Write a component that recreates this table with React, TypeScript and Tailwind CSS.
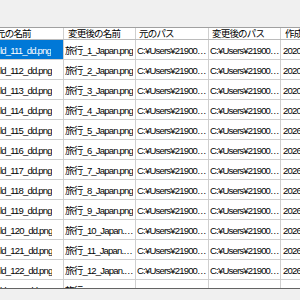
import React from "react";

const rows = Array.from({ length: 13 }, (_, i) => ({
  src: `ld_${111 + i}_dd.png`,
  dst: `旅行_${i + 1}_Japan.png`,
  srcPath: "C:¥Users¥219004¥Pictures¥old",
  dstPath: "C:¥Users¥219004¥Pictures¥new",
  created: i < 4 ? "2020/10/01" : "2026/10/01",
}));

const cell = "shrink-0 border-r border-[#cfcfcf] whitespace-nowrap overflow-hidden flex items-center";

export default function App() {
  return (
    <div
      className="w-[300px] h-[300px] bg-[#f0f0f0] flex flex-col overflow-hidden text-[9.5px] tracking-[-0.8px] text-black"
      style={{ fontFamily: '"Liberation Sans", "Noto Sans CJK JP", sans-serif' }}
    >
      <div className="h-[27px] shrink-0" />
      <div className="h-[262px] shrink-0 bg-white border-t border-[#a0a0a0] border-b border-b-[#646464] overflow-hidden">
        {/* header */}
        <div className="flex h-[12px] border-b border-[#bcbcbc] leading-[12px]">
          <div className={`${cell} w-[64px]`}>
            <span className="-ml-[4px]">元の名前</span>
          </div>
          <div className={`${cell} w-[72px] pl-[4px]`}>変更後の名前</div>
          <div className={`${cell} w-[73px] pl-[3px]`}>元のパス</div>
          <div className={`${cell} w-[72px] pl-[3px]`}>変更後のパス</div>
          <div className={`${cell} flex-1 min-w-0 pl-[4px] border-r-0`}>作成日時</div>
        </div>
        {rows.map((r, i) => (
          <div key={i} className="flex h-[20px] border-b border-[#cfcfcf]">
            <div className={`${cell} w-[64px] pt-[4px] ${i === 0 ? "bg-[#0078d7] text-white" : ""}`}>
              <span className="block overflow-hidden">{r.src}</span>
            </div>
            <div className={`${cell} w-[72px] pl-[1px] pt-[4px]`}>
              <span className="block overflow-hidden text-ellipsis">{r.dst}</span>
            </div>
            <div className={`${cell} w-[73px] pl-[1px] pt-[4px]`}>
              <span className="block overflow-hidden text-ellipsis">{r.srcPath}</span>
            </div>
            <div className={`${cell} w-[72px] pl-[1px] pt-[4px]`}>
              <span className="block overflow-hidden text-ellipsis">{r.dstPath}</span>
            </div>
            <div className={`${cell} flex-1 min-w-0 pl-[2px] pt-[4px] border-r-0`}>{r.created}</div>
          </div>
        ))}
      </div>
    </div>
  );
}
